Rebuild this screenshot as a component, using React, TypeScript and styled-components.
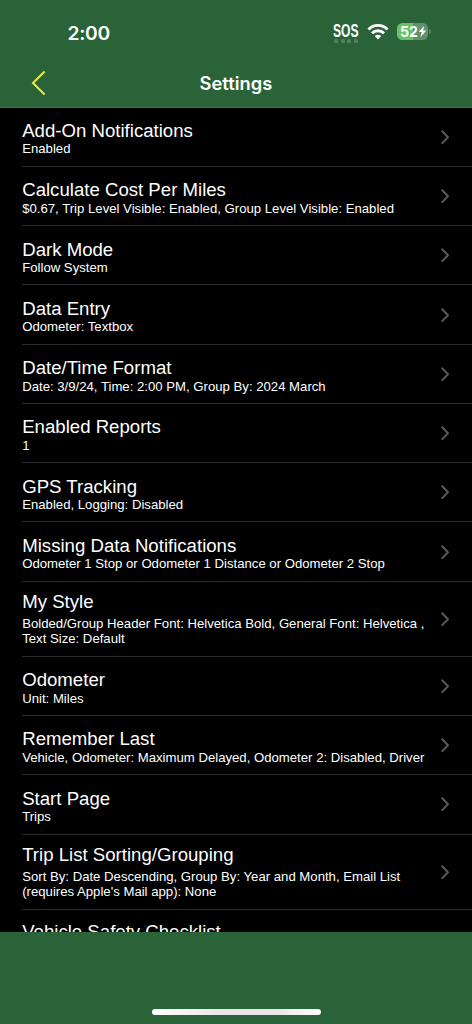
import React from "react";
import styled, { createGlobalStyle } from "styled-components";

const GlobalStyle = createGlobalStyle`
  * { box-sizing: border-box; }
  body { margin: 0; background: #2a6338; }
`;

const Screen = styled.div`
  width: 472px;
  height: 1024px;
  display: flex;
  flex-direction: column;
  overflow: hidden;
  background: #2a6338;
  color: #fff;
  font-family: "Liberation Sans", Arial, sans-serif;
`;

const StatusBar = styled.header`
  height: 59px;
  flex: none;
  display: flex;
  justify-content: space-between;
  padding: 0 41px 0 67.5px;
`;

const Clock = styled.time`
  font: 600 19.3px/24px Inter, sans-serif;
  letter-spacing: -0.3px;
  padding-top: 21px;
`;

const StatusIcons = styled.div`
  display: flex;
  align-items: flex-start;
  padding-top: 23px;
`;

const Cellular = styled.div`
  width: 26px;
  margin-right: 8px;
`;

const CarrierText = styled.div`
  font: 700 17.8px/16px "Liberation Sans", sans-serif;
  width: 40px;
  transform: scaleX(0.68);
  transform-origin: left;
`;

const SignalDots = styled.div`
  display: flex;
  gap: 2.6px;
  padding: 0 0 0 1px;
`;

const Dot = styled.i`
  width: 4px;
  height: 4px;
  border-radius: 1.5px;
  background: #4e8260;
`;

const Battery = styled.div`
  width: 31px;
  height: 17px;
  margin-left: 8px;
  border-radius: 5.5px;
  display: flex;
  align-items: center;
  padding-left: 3px;
  background: linear-gradient(90deg, #66c466 0 52%, #62906c 52%);
`;

const Charge = styled.span`
  font: 700 14.2px/17px Inter, sans-serif;
  letter-spacing: -0.1px;
  width: 18px;
`;

const BatteryTip = styled.i`
  width: 2px;
  height: 5px;
  margin: 6px 0 0 1px;
  border-radius: 0 2px 2px 0;
  background: #568663;
`;

const NavBar = styled.nav`
  height: 48.6px;
  flex: none;
  display: grid;
  grid-template-columns: 80px 1fr 80px;
  align-items: center;
  border-bottom: 1px solid #3f6f4b;
`;

const BackButton = styled.button`
  display: flex;
  padding: 0 0 0 31px;
  border: 0;
  background: none;
`;

const Heading = styled.h1`
  margin: 0;
  text-align: center;
  font: 600 18.3px/24px Inter, sans-serif;
  letter-spacing: 0.05px;
`;

const List = styled.main`
  height: 824.9px;
  flex: none;
  overflow: hidden;
  background: #000;
`;

const Row = styled.section<{ $tall?: boolean }>`
  height: ${(p) => (p.$tall ? 75 : 59.27)}px;
  margin-left: 22.2px;
  padding-right: 22px;
  display: flex;
  align-items: center;
  justify-content: space-between;
  border-bottom: 1px solid #2b2b2d;
`;

const RowText = styled.div<{ $tall?: boolean }>`
  display: flex;
  flex-direction: column;
  gap: ${(p) => (p.$tall ? 4 : 0.5)}px;
  padding-top: ${(p) => (p.$tall ? 0 : 3)}px;
  white-space: pre;
`;

const Title = styled.h2`
  margin: 0;
  font-size: 18.62px;
  font-weight: 400;
  line-height: 21px;
`;

const Detail = styled.p`
  margin: 0;
  font-size: 13.16px;
  line-height: 15px;
`;

const Footer = styled.footer`
  flex: 1;
  display: flex;
  align-items: flex-end;
  justify-content: center;
  padding-bottom: 9px;
`;

const HomeIndicator = styled.div`
  width: 169px;
  height: 6px;
  border-radius: 3px;
  background: linear-gradient(90deg, #fff, #e8e8ec 40%, #e8e8ec 75%, #fff);
`;

const settings: { title: string; detail?: string; tall?: boolean }[] = [
  { title: "Add-On Notifications", detail: "Enabled" },
  { title: "Calculate Cost Per Miles", detail: "$0.67, Trip Level Visible: Enabled, Group Level Visible: Enabled" },
  { title: "Dark Mode", detail: "Follow System" },
  { title: "Data Entry", detail: "Odometer: Textbox" },
  { title: "Date/Time Format", detail: "Date: 3/9/24, Time: 2:00 PM, Group By: 2024 March" },
  { title: "Enabled Reports", detail: "1" },
  { title: "GPS Tracking", detail: "Enabled, Logging: Disabled" },
  { title: "Missing Data Notifications", detail: "Odometer 1 Stop or Odometer 1 Distance or Odometer 2 Stop" },
  { title: "My Style", detail: "Bolded/Group Header Font: Helvetica Bold, General Font: Helvetica ,\nText Size: Default", tall: true },
  { title: "Odometer", detail: "Unit: Miles" },
  { title: "Remember Last", detail: "Vehicle, Odometer: Maximum Delayed, Odometer 2: Disabled, Driver" },
  { title: "Start Page", detail: "Trips" },
  { title: "Trip List Sorting/Grouping", detail: "Sort By: Date Descending, Group By: Year and Month, Email List\n(requires Apple's Mail app): None", tall: true },
];

const LastRow = styled(Row)`
  align-items: flex-start;
  padding-top: 11px;
`;

const Chevron = () => (
  <svg width="10" height="16" viewBox="0 0 10 16" fill="none" style={{ flex: "none" }}>
    <path d="M2.2 2.3 8 8.2l-5.8 5.9" stroke="#59595d" strokeWidth="2" strokeLinecap="round" strokeLinejoin="round" />
  </svg>
);

const Wifi = () => (
  <svg width="22" height="18" viewBox="0 0 22 18" fill="none" stroke="#fff" strokeWidth="2.9">
    <path d="M1.5 6.4a13.3 13.3 0 0 1 19 0" />
    <path d="M5 10.2a8.5 8.5 0 0 1 12 0" />
    <path d="M11 16.4 7.8 13.1a4.6 4.6 0 0 1 6.4 0Z" fill="#fff" stroke="none" />
  </svg>
);

const Bolt = () => (
  <svg width="9" height="13" viewBox="0 0 9 13" fill="#fff">
    <path d="M6.2.8.7 7h3L2.4 12.2 8.3 5.6H5.1Z" />
  </svg>
);

export default function App() {
  return (
    <Screen>
      <GlobalStyle />
      <StatusBar>
        <Clock>2:00</Clock>
        <StatusIcons>
          <Cellular>
            <CarrierText>SOS</CarrierText>
            <SignalDots><Dot /><Dot /><Dot /><Dot /></SignalDots>
          </Cellular>
          <Wifi />
          <Battery><Charge>52</Charge><Bolt /></Battery>
          <BatteryTip />
        </StatusIcons>
      </StatusBar>
      <NavBar>
        <BackButton aria-label="Back">
          <svg width="16" height="26" viewBox="0 0 16 26" fill="none">
            <path d="M13.6 1.5 2 13l11.6 11.5" stroke="#e9ed3d" strokeWidth="2" />
          </svg>
        </BackButton>
        <Heading>Settings</Heading>
      </NavBar>
      <List>
        {settings.map((s) => (
          <Row key={s.title} $tall={s.tall}>
            <RowText $tall={s.tall}>
              <Title>{s.title}</Title>
              <Detail>{s.detail}</Detail>
            </RowText>
            <Chevron />
          </Row>
        ))}
        <LastRow>
          <Title>Vehicle Safety Checklist</Title>
        </LastRow>
      </List>
      <Footer><HomeIndicator /></Footer>
    </Screen>
  );
}
